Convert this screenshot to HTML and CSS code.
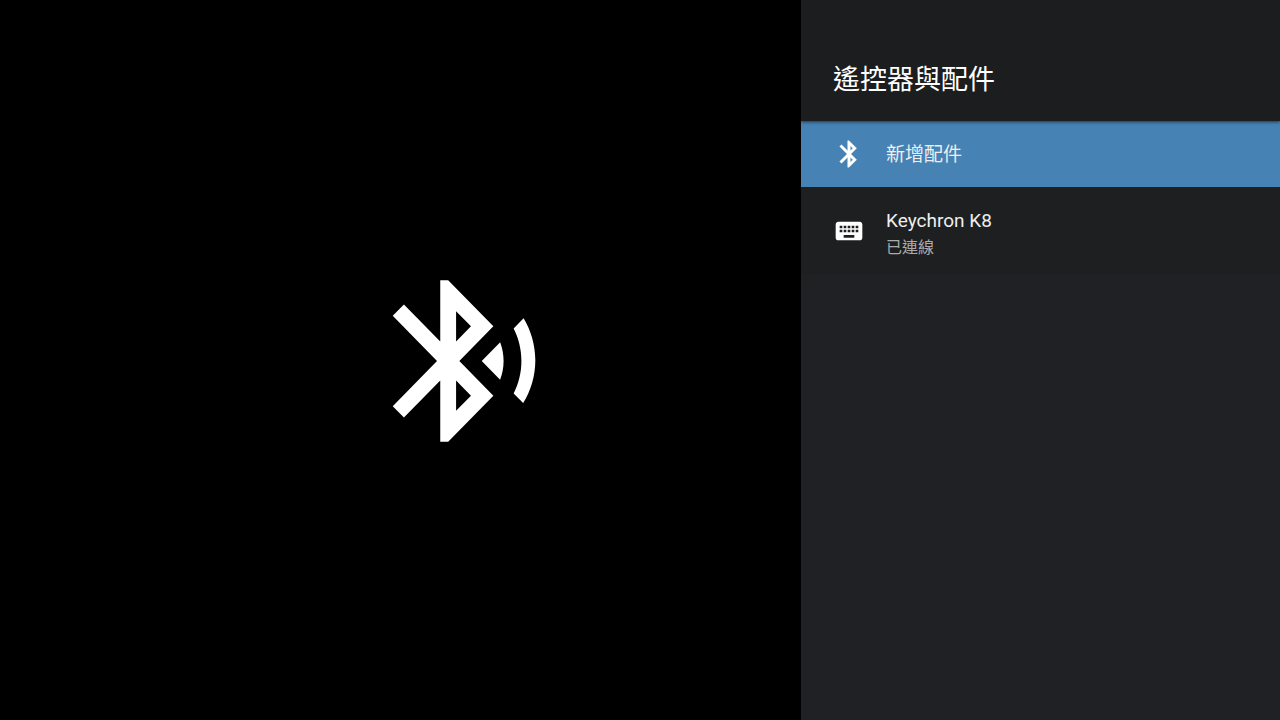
FILE: index.html
```html
<!DOCTYPE html>
<html lang="zh-Hant">
<head>
<meta charset="UTF-8">
<meta name="viewport" content="width=device-width, initial-scale=1.0">
<title>遙控器與配件</title>
<link rel="stylesheet" href="styles.css">
</head>
<body>
<div class="screen">
    <main class="preview">
        <svg class="preview-icon" viewBox="0 0 24 24" preserveAspectRatio="none" aria-hidden="true">
            <path d="M14.24 12.01l2.32 2.32c.28-.72.44-1.51.44-2.33 0-.82-.16-1.59-.43-2.31l-2.33 2.32zm5.29-5.3l-1.26 1.26c.63 1.21.98 2.57.98 4.02s-.36 2.82-.98 4.02l1.2 1.2c.97-1.54 1.54-3.36 1.54-5.31-.01-1.89-.55-3.67-1.48-5.19zm-3.82 1L10 2H9v7.59L4.41 5 3 6.41 8.59 12 3 17.59 4.41 19 9 14.41V22h1l5.71-5.71-4.3-4.29 4.3-4.29zM11 5.83l1.88 1.88L11 9.59V5.83zm1.88 10.46L11 18.17v-3.76l1.88 1.88z"/>
        </svg>
    </main>
    <aside class="panel">
        <header class="panel-header">
            <h1>遙控器與配件</h1>
        </header>
        <div class="list">
            <button class="item selected" type="button">
                <svg class="item-icon bluetooth" viewBox="0 0 24 24" aria-hidden="true">
                    <path d="M17.71 7.71L12 2h-1v7.59L6.41 5 5 6.41 10.59 12 5 17.59 6.41 19 11 14.41V22h1l5.71-5.71-4.3-4.29 4.3-4.29zM13 5.83l1.88 1.88L13 9.59V5.83zm1.88 10.46L13 18.17v-3.76l1.88 1.88z"/>
                </svg>
                <span class="item-text">
                    <span class="item-title">新增配件</span>
                </span>
            </button>
            <button class="item device" type="button">
                <svg class="item-icon" viewBox="0 0 24 24" aria-hidden="true">
                    <path d="M20 5H4c-1.1 0-1.99.9-1.99 2L2 17c0 1.1.9 2 2 2h16c1.1 0 2-.9 2-2V7c0-1.1-.9-2-2-2zm-9 3h2v2h-2V8zm0 3h2v2h-2v-2zM8 8h2v2H8V8zm0 3h2v2H8v-2zm-1 2H5v-2h2v2zm0-3H5V8h2v2zm9 7H8v-2h8v2zm0-4h-2v-2h2v2zm0-3h-2V8h2v2zm3 3h-2v-2h2v2zm0-3h-2V8h2v2z"/>
                </svg>
                <span class="item-text">
                    <span class="item-title">Keychron K8</span>
                    <span class="item-status">已連線</span>
                </span>
            </button>
        </div>
    </aside>
</div>
</body>
</html>
```

FILE: styles.css
```css
* {
    box-sizing: border-box;
}
body {
    margin: 0;
    background-color: #000;
    color: #fff;
    font-family: Roboto, "Noto Sans CJK TC", sans-serif;
}
.screen {
    display: grid;
    grid-template-columns: 801fr 479fr;
    min-height: 100vh;
}
.preview {
    display: flex;
    align-items: center;
    justify-content: center;
    padding: 2px 0 0 126px;
}
.preview-icon {
    width: 190px;
    height: 194px;
    fill: #fff;
}
.panel {
    background-color: #202124;
}
.panel-header {
    position: relative;
    padding: 60px 32px 21px;
    background-color: #1c1d1e;
    box-shadow: 0 1px 3px rgba(0, 0, 0, 0.6);
}
h1 {
    margin: 0;
    font-size: 27px;
    font-weight: 400;
    line-height: 40px;
}
.item {
    display: flex;
    align-items: center;
    gap: 21px;
    width: 100%;
    min-height: 66px;
    padding: 0 32px;
    border: none;
    background-color: #1e1f21;
    color: #eee;
    font-family: inherit;
    text-align: left;
    cursor: pointer;
}
.device {
    min-height: 88px;
}
.selected {
    background-color: #4682b4;
}
.item-icon {
    flex: none;
    width: 32px;
    height: 32px;
    fill: #fff;
}
.bluetooth {
    stroke: #fff;
    stroke-width: 0.25;
    stroke-linejoin: round;
}
.item-text {
    display: flex;
    flex-direction: column;
    padding-top: 2px;
}
.device .item-text {
    padding-top: 6px;
}
.item-title {
    font-size: 19px;
    line-height: 28px;
}
.item-status {
    color: #aaabac;
    font-size: 16px;
    line-height: 26px;
}
```
